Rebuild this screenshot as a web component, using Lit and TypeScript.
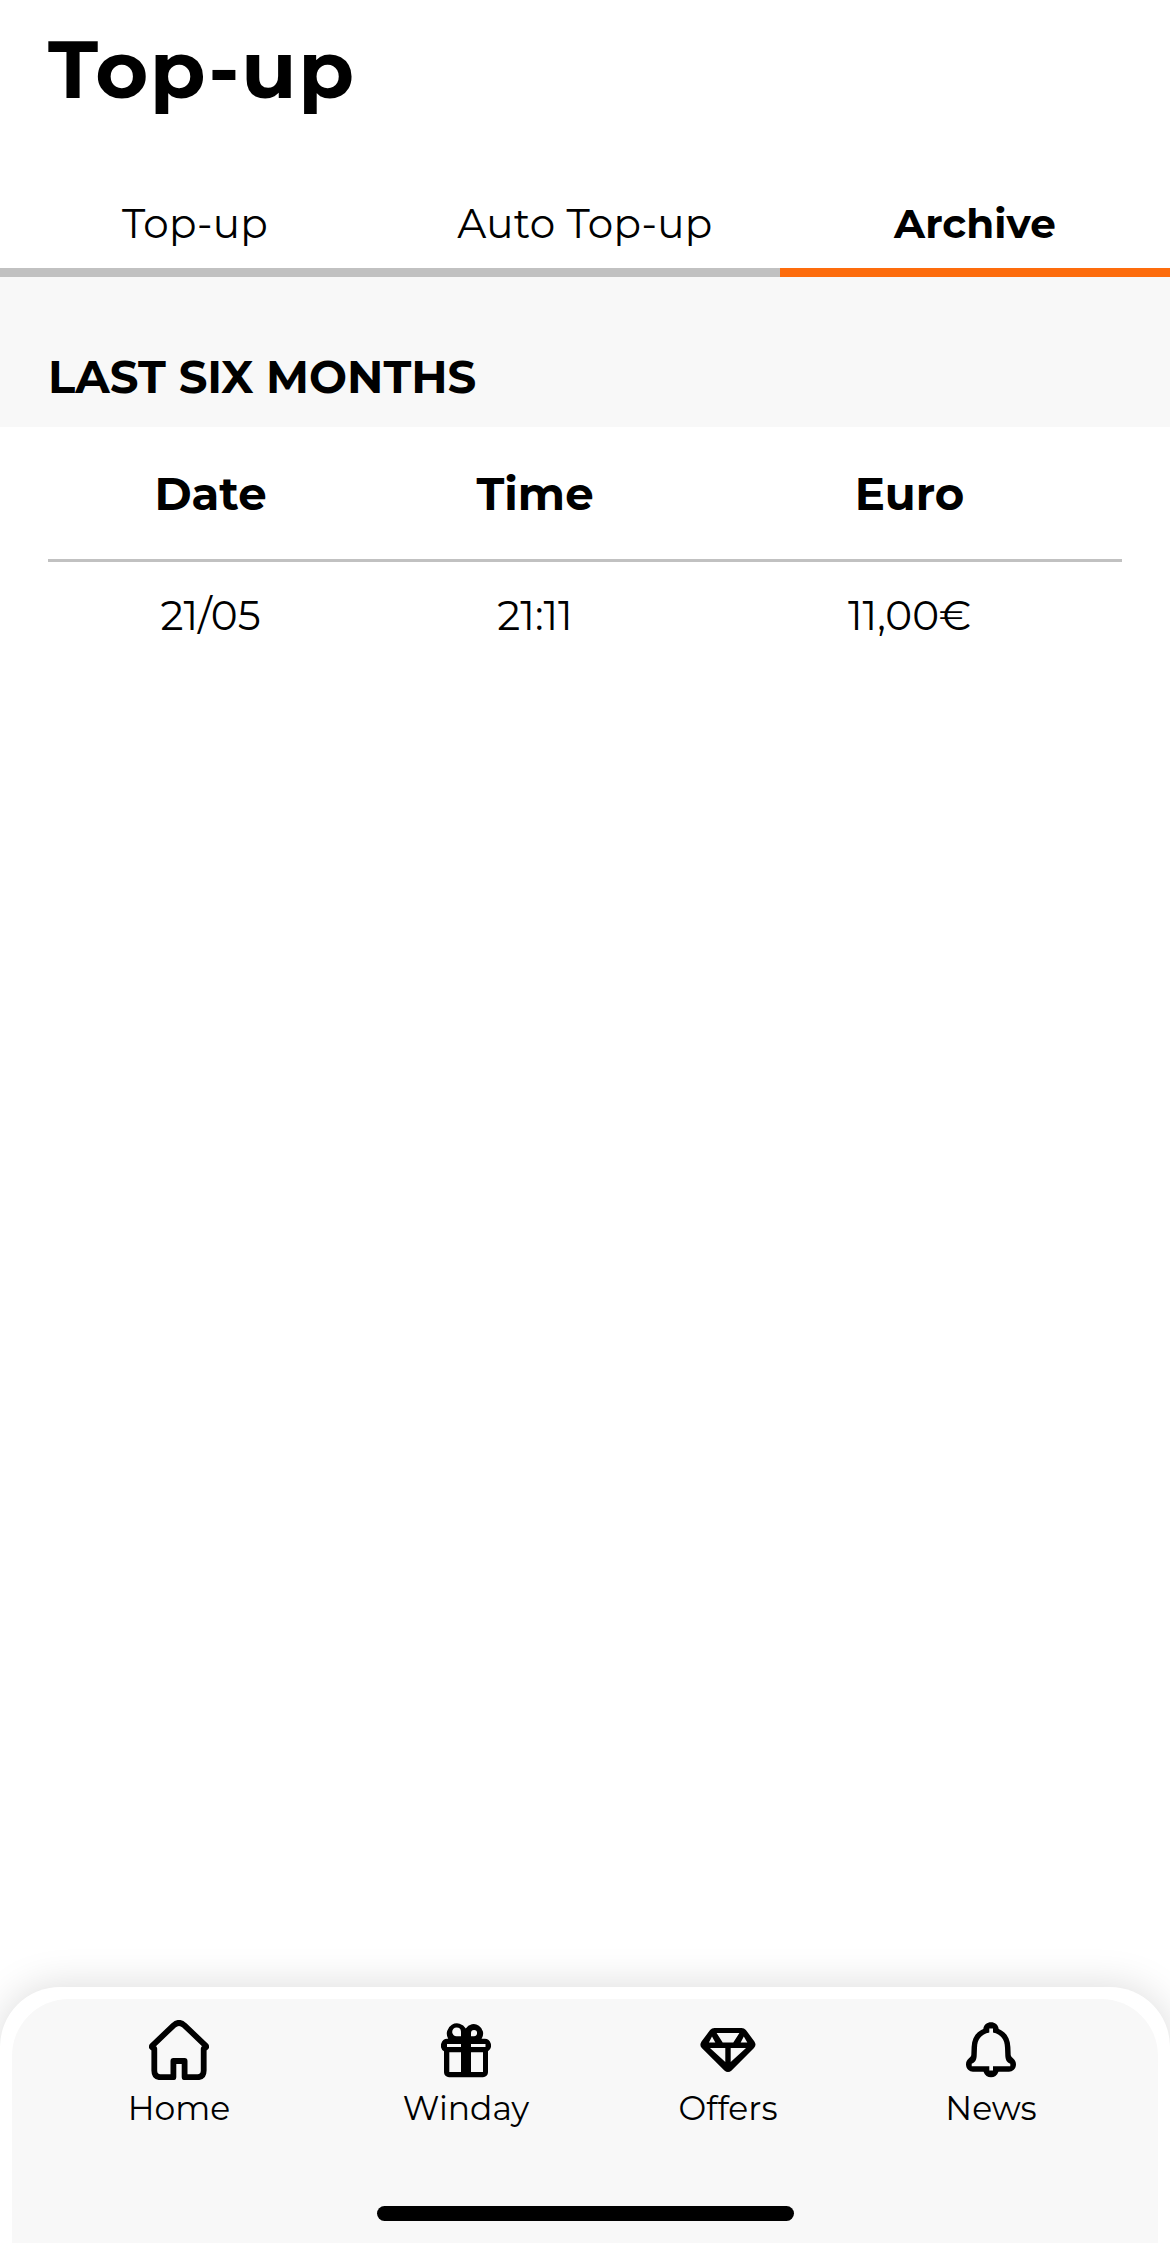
import { LitElement, html, css, svg } from "lit";
import { customElement } from "lit/decorators.js";

const icons = {
  home: svg`<svg class="icon" width="60" height="60" viewBox="0 0 60 60" fill="none" stroke="#000" stroke-width="5.8" stroke-linejoin="round" stroke-linecap="round">
    <path d="M5.3 28.5 Q1.6 27.5 3.4 25.6 L24.6 5.3 Q30 .5 35.4 5.3 L56.6 25.6 Q58.4 27.5 54.7 28.5 V50.5 Q54.7 57.2 48.6 57.2 H35.6 V41 H24.4 V57.2 H11.4 Q5.3 57.2 5.3 50.5 Z"/></svg>`,
  gift: svg`<svg class="icon" width="50" height="56" viewBox="0 0 50 56" fill="#000" fill-rule="evenodd">
    <path d="M7.2 16.7 A9.9 9.9 0 1 1 24.8 6.4 A8.7 8.7 0 1 1 40.6 16.7 H43.5 A6.3 6.8 0 0 1 47 29.3 V50.3 A5 5 0 0 1 42 55.3 H8 A5 5 0 0 1 3 50.3 V29.3 A6.3 6.8 0 0 1 6.6 16.7 Z
      M15.5 5.6 A4.2 4.2 0 1 0 15.5 14.2 H20 V9.7 A4.4 4.4 0 0 0 15.5 5.6 Z
      M33 8 A3 3 0 0 0 30 11 V14.2 H33 A3.1 3.1 0 0 0 33 8 Z
      M6 22 H20 V25 H6 Z M30 22 H44.5 V25 H30 Z
      M8.3 30.3 H20 V50 H8.3 Z M30 30.3 H42 V50 H30 Z"/></svg>`,
  gem: svg`<svg class="icon" width="56" height="44" viewBox="0 0 56 44" fill="#000" fill-rule="evenodd">
    <path d="M14.5 0 H41.5 Q44.2 0 45.9 2 L54.4 13.4 Q56.8 17 54 20 L31.6 42.4 Q28 45.4 24.4 42.4 L1.8 20 Q-.9 17 1.5 13.4 L10.1 2 Q11.8 0 14.5 0 Z
      M16.6 5 L22.7 14.5 H33.3 L39.4 5 Z
      M12 8.6 L8.9 14.5 H15.3 Z M43.8 8.6 L40.7 14.5 H47.3 Z
      M10 20 H25.3 V34 Z M30.7 20 H46 L30.7 34 Z"/></svg>`,
  bell: svg`<svg class="icon" width="50" height="56" viewBox="0 0 50 56" fill="#000" fill-rule="evenodd">
    <path d="M17.3 7 C18 2.5 21 .3 25 .3 S32 2.5 32.7 7 C40 10 44 16 44.4 25 L44.7 33 C45 36 50 37 50 42.3 C50 47 46.5 49.8 43 49.8 H32.5 C31 53.5 28.5 55.3 25 55.3 S19 53.5 17.5 49.8 H7 C3.5 49.8 0 47 0 42.3 C0 37 5 36 5.3 33 L5.6 25 C6 16 10 10 17.3 7 Z
      M23.3 6.5 V10.5 C15 12.5 11.2 17 11 26 L10.7 34 C10.4 38.5 8.5 40.8 5.7 41.8 V44.3 H23.3 V48.6 H27 V44.3 H44.3 V41.8 C41.5 40.8 39.6 38.5 39.3 34 L39 26 C38.8 17 35 12.5 27 10.5 V6.5 Z"/></svg>`,
};

@customElement("app-root")
export class AppRoot extends LitElement {
  static styles = css`
    :host {
      display: flex;
      flex-direction: column;
      height: 2243px;
      overflow: hidden;
      background: #fff;
      color: #000;
      font-family: Montserrat, Inter, "Open Sans", sans-serif;
      font-weight: 400;
      white-space: nowrap;
    }
    .title {
      margin: 0;
      padding: 0 0 41px 48px;
      font-size: 81px;
      line-height: 138px;
      height: 139px;
      font-weight: 700;
      letter-spacing: 1.6px;
    }
    .tabs { display: grid; grid-template-columns: repeat(3, 1fr); }
    .tab {
      height: 88px;
      line-height: 88px;
      text-align: center;
      font-size: 40.5px;
      letter-spacing: 0.3px;
      border-bottom: 9px solid #c1c1c1;
    }
    .tab.active { font-weight: 700; letter-spacing: 0.1px; border-color: #fd6c0d; }
    .section {
      margin: 0;
      padding: 50px 0 0 48px;
      background: #f8f8f8;
      font-size: 45px;
      line-height: 100px;
      font-weight: 700;
    }
    .table { margin: 0 48px; flex: 1; }
    .row {
      display: grid;
      grid-template-columns: 325px 324px 425px;
      text-align: center;
      font-size: 40.5px;
      line-height: 108px;
    }
    .row.head {
      padding-top: 2px;
      font-size: 45px;
      line-height: 130px;
      font-weight: 700;
      border-bottom: 3px solid #c1c1c1;
    }
    .dock {
      box-sizing: border-box;
      height: 256px;
      padding: 12px 12px 0;
      border-radius: 60px 60px 0 0;
      background: #fff;
      box-shadow: 0 0 40px rgba(0, 0, 0, 0.15);
    }
    .panel {
      height: 244px;
      border-radius: 57px 57px 0 0;
      background: #f8f8f8;
      display: flex;
      flex-direction: column;
      align-items: center;
    }
    .nav {
      align-self: stretch;
      height: 207px;
      display: grid;
      grid-template-columns: 334px 240px 284px 242px;
    }
    .item { display: flex; flex-direction: column; align-items: center; padding-top: 21px; }
    .glyph { height: 60px; display: flex; align-items: center; }
    .icon { display: block; }
    .label { font-size: 33px; line-height: 57px; }
    .handle { width: 417px; height: 15px; border-radius: 8px; background: #000; }
  `;

  render() {
    const nav = [
      { label: "Home", icon: icons.home },
      { label: "Winday", icon: icons.gift },
      { label: "Offers", icon: icons.gem },
      { label: "News", icon: icons.bell },
    ];
    return html`
      <h1 class="title">Top-up</h1>
      <div class="tabs">
        <div class="tab"><span>Top-up</span></div>
        <div class="tab"><span>Auto Top-up</span></div>
        <div class="tab active"><span>Archive</span></div>
      </div>
      <h2 class="section">LAST SIX MONTHS</h2>
      <div class="table">
        <div class="row head"><span>Date</span><span>Time</span><span>Euro</span></div>
        <div class="row"><span>21/05</span><span>21:11</span><span>11,00€</span></div>
      </div>
      <div class="dock">
        <div class="panel">
          <div class="nav">
            ${nav.map((n) => html`<div class="item"><div class="glyph">${n.icon}</div><span class="label">${n.label}</span></div>`)}
          </div>
          <div class="handle"></div>
        </div>
      </div>
    `;
  }
}
